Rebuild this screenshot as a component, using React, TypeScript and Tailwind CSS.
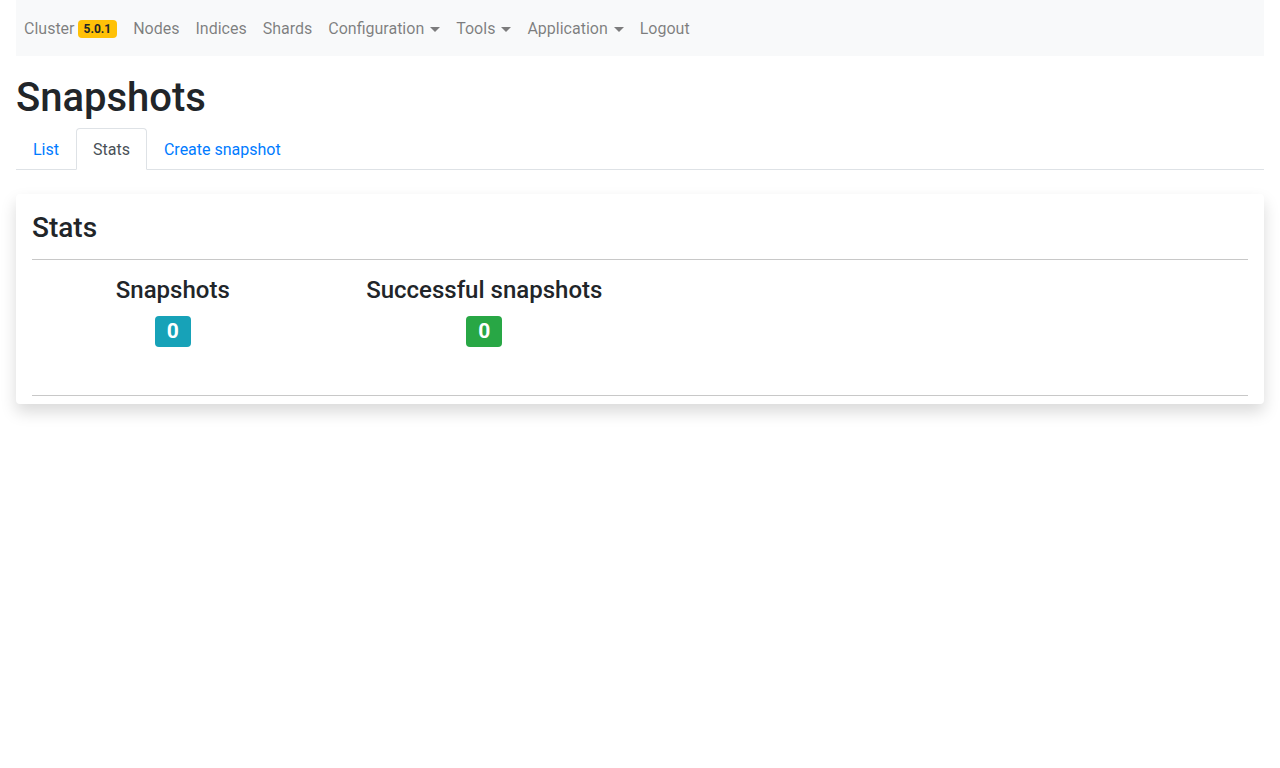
import React from 'react'

const FONT = { fontFamily: 'Roboto, "Noto Sans", "Liberation Sans", sans-serif' }

function Caret() {
  return (
    <span className="ml-[6px] inline-block align-[3px] w-0 h-0 border-t-[5px] border-t-current border-x-[5px] border-x-transparent" />
  )
}

const NAV = [
  { label: 'Nodes' },
  { label: 'Indices' },
  { label: 'Shards' },
  { label: 'Configuration', caret: true },
  { label: 'Tools', caret: true },
  { label: 'Application', caret: true },
  { label: 'Logout' },
]

function StatBlock({ title, value, color }: { title: string; value: number; color: string }) {
  return (
    <div className="px-[15px] flex flex-col items-center">
      <h4 className="text-[24px] leading-[28.8px] font-medium text-[#212529] mb-2">{title}</h4>
      <span
        className={`mt-[3px] inline-flex items-center justify-center h-[31px] w-[36px] rounded-[4px] text-white text-[21px] font-bold ${color}`}
      >
        {value}
      </span>
    </div>
  )
}

export default function App() {
  return (
    <div className="min-h-screen bg-white text-[#212529]" style={FONT}>
      <div className="mx-4">
        {/* Navbar */}
        <nav className="h-14 bg-[#f8f9fa] flex items-center pt-[2px]">
          <ul className="flex items-center text-[16px] leading-6 text-black/50">
            <li className="px-2 py-2 flex items-center">
              Cluster
              <span className="ml-[3px] inline-flex items-center h-[18px] px-[6px] rounded-[4px] bg-[#ffc107] text-[#212529] text-[12px] font-bold">
                5.0.1
              </span>
            </li>
            {NAV.map(n => (
              <li key={n.label} className="px-2 py-2 flex items-center">
                {n.label}
                {n.caret && <Caret />}
              </li>
            ))}
          </ul>
        </nav>

        <h1 className="mt-[18px] mb-[6px] text-[40px] leading-[48px] font-medium text-[#212529]">Snapshots</h1>

        {/* Tabs */}
        <div className="flex border-b border-[#dee2e6]">
          <a className="px-4 pt-[9px] pb-[7px] leading-6 border border-transparent text-[#007bff] text-[16px] -mb-px">List</a>
          <a className="px-4 pt-[9px] pb-[7px] leading-6 border border-[#dee2e6] border-b-white bg-white rounded-t-[4px] text-[#495057] text-[16px] -mb-px">
            Stats
          </a>
          <a className="px-4 pt-[9px] pb-[7px] leading-6 border border-transparent text-[#007bff] text-[16px] -mb-px">Create snapshot</a>
        </div>

        {/* Card */}
        <div className="mt-6 bg-white rounded-[4px] shadow-[0_8px_16px_rgba(0,0,0,0.15)] px-4 pt-4 pb-2">
          <h3 className="pt-px text-[28px] leading-[33px] font-medium text-[#212529]">Stats</h3>
          <hr className="mt-[15px] mb-4 border-0 border-t border-[#c8c8c8]" />
          <div className="-mx-[15px] grid grid-cols-4">
            <StatBlock title="Snapshots" value={0} color="bg-[#17a2b8]" />
            <StatBlock title="Successful snapshots" value={0} color="bg-[#28a745]" />
          </div>
          <hr className="mt-[48px] border-0 border-t border-[#c8c8c8]" />
        </div>
      </div>
    </div>
  )
}
